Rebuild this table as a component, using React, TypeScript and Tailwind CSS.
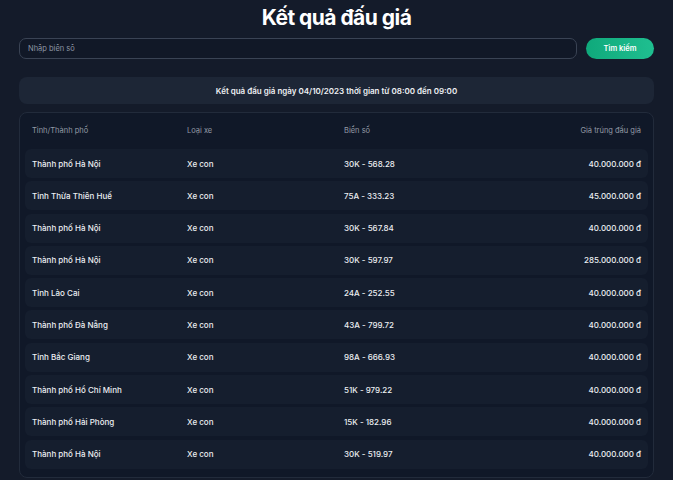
const ROWS = [
  { city: 'Thành phố Hà Nội', type: 'Xe con', plate: '30K - 568.28', price: '40.000.000 đ' },
  { city: 'Tỉnh Thừa Thiên Huế', type: 'Xe con', plate: '75A - 333.23', price: '45.000.000 đ' },
  { city: 'Thành phố Hà Nội', type: 'Xe con', plate: '30K - 567.84', price: '40.000.000 đ' },
  { city: 'Thành phố Hà Nội', type: 'Xe con', plate: '30K - 597.97', price: '285.000.000 đ' },
  { city: 'Tỉnh Lào Cai', type: 'Xe con', plate: '24A - 252.55', price: '40.000.000 đ' },
  { city: 'Thành phố Đà Nẵng', type: 'Xe con', plate: '43A - 799.72', price: '40.000.000 đ' },
  { city: 'Tỉnh Bắc Giang', type: 'Xe con', plate: '98A - 666.93', price: '40.000.000 đ' },
  { city: 'Thành phố Hồ Chí Minh', type: 'Xe con', plate: '51K - 979.22', price: '40.000.000 đ' },
  { city: 'Thành phố Hải Phòng', type: 'Xe con', plate: '15K - 182.96', price: '40.000.000 đ' },
  { city: 'Thành phố Hà Nội', type: 'Xe con', plate: '30K - 519.97', price: '40.000.000 đ' },
];

export default function App() {
  return (
    <div className="min-h-screen bg-[#141b2a] text-white font-['Inter','Noto_Sans',sans-serif]">
      <div className="px-[19px] pt-[4px] pb-6">
        <h1 className="text-center text-[21px] font-bold leading-[28px] tracking-tight">Kết quả đấu giá</h1>

        <div className="mt-[6px] flex items-center gap-[9px]">
          <input
            placeholder="Nhập biển số"
            className="h-[21px] flex-1 rounded-[7px] border border-[#3a4354] bg-[#111827] px-[8px] text-[7.5px] text-white placeholder:text-[#8d95a3] outline-none"
          />
          <button className="h-[21px] w-[68px] rounded-full bg-gradient-to-r from-[#0fa97b] to-[#1fbf90] text-[7.5px] font-semibold text-white">
            Tìm kiếm
          </button>
        </div>

        <div className="mt-[18px] flex h-[27px] items-center justify-center rounded-[8px] bg-[#1d2636] text-[8px] font-semibold text-[#eef0f3]">
          Kết quả đấu giá ngày 04/10/2023 thời gian từ 08:00 đến 09:00
        </div>

        <div className="mt-[8px] rounded-[8px] border border-[#222b3b] bg-[#101828] px-[5px] pb-[8px]">
          <div className="grid h-[36px] grid-cols-[155px_157px_1fr_auto] items-center px-[7px] text-[7.5px] text-[#939aa6]">
            <span>Tỉnh/Thành phố</span>
            <span>Loại xe</span>
            <span>Biển số</span>
            <span className="text-right">Giá trúng đấu giá</span>
          </div>
          <div className="flex flex-col gap-[3.3px]">
            {ROWS.map((r, i) => (
              <div
                key={i}
                className="grid h-[29px] grid-cols-[155px_157px_1fr_auto] items-center rounded-[6px] bg-[#151e2e] px-[7px] text-[8px] font-medium text-[#eceef2]"
              >
                <span>{r.city}</span>
                <span>{r.type}</span>
                <span>{r.plate}</span>
                <span className="text-right">{r.price}</span>
              </div>
            ))}
          </div>
        </div>
      </div>
    </div>
  );
}
